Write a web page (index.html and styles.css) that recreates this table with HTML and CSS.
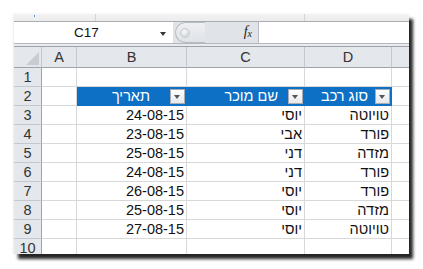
FILE: index.html
```html
<!DOCTYPE html>
<html lang="he">
<head>
<meta charset="utf-8">
<link rel="stylesheet" href="styles.css">
</head>
<body>
<div class="window">
  <div class="topstrip"><span class="dot"></span><span class="tick t1"></span><span class="tick t2"></span></div>
  <div class="fbar">
    <div class="namebox"><span class="ref">C17</span><span class="caret"></span></div>
    <div class="mid"><span class="pill"><span class="knob"></span></span><span class="fx">f<sub>x</sub></span></div>
    <div class="input"></div>
  </div>
  <div class="gap"></div>
  <div class="sheet">
    <div class="ch corner"><svg width="13" height="13" viewBox="0 0 13 13"><polygon points="13,0 13,13 0,13" fill="#c9cdd3"/></svg></div>
    <div class="ch">A</div><div class="ch">B</div><div class="ch">C</div><div class="ch">D</div><div class="ch last"></div>

    <div class="rh">1</div><div class="c"></div><div class="c"></div><div class="c"></div><div class="c"></div><div class="c last"></div>

    <div class="rh">2</div><div class="c"></div>
    <div class="c hd hb"><span class="ht">תאריך</span><span class="btn"></span></div>
    <div class="c hd hc"><span class="ht">שם מוכר</span><span class="btn"></span></div>
    <div class="c hd hdd"><span class="ht">סוג רכב</span><span class="btn"></span></div>
    <div class="c last"></div>

    <div class="rh">3</div><div class="c"></div><div class="c r">24-08-15</div><div class="c r">יוסי</div><div class="c r">טויוטה</div><div class="c last"></div>
    <div class="rh">4</div><div class="c"></div><div class="c r">23-08-15</div><div class="c r">אבי</div><div class="c r">פורד</div><div class="c last"></div>
    <div class="rh">5</div><div class="c"></div><div class="c r">25-08-15</div><div class="c r">דני</div><div class="c r">מזדה</div><div class="c last"></div>
    <div class="rh">6</div><div class="c"></div><div class="c r">24-08-15</div><div class="c r">דני</div><div class="c r">פורד</div><div class="c last"></div>
    <div class="rh">7</div><div class="c"></div><div class="c r">26-08-15</div><div class="c r">יוסי</div><div class="c r">פורד</div><div class="c last"></div>
    <div class="rh">8</div><div class="c"></div><div class="c r">25-08-15</div><div class="c r">יוסי</div><div class="c r">מזדה</div><div class="c last"></div>
    <div class="rh">9</div><div class="c"></div><div class="c r">27-08-15</div><div class="c r">יוסי</div><div class="c r">טויוטה</div><div class="c last"></div>
    <div class="rh r10">10</div><div class="c"></div><div class="c"></div><div class="c"></div><div class="c"></div><div class="c last"></div>
  </div>
</div>
</body>
</html>
```

FILE: styles.css
```css
* { box-sizing: border-box; }
html, body { margin: 0; padding: 0; background: #fff; }
body {
  width: 423px; height: 269px; overflow: hidden;
  font-family: "Liberation Sans", Arial, sans-serif;
  color: #111;
  padding: 14px 0 0 14px;
}
.window {
  width: 395px; height: 240px;
  background: #fff;
  overflow: hidden;
  box-shadow: 4px 5px 3px rgba(0,0,0,0.85), -1px 0 2px rgba(0,0,0,0.08);
  display: flex; flex-direction: column;
}
.topstrip {
  height: 8px; flex: none;
  background: linear-gradient(#f3f3f3, #ececec);
  border-bottom: 1px solid #a9adb3;
  position: relative;
}
.dot { position: absolute; left: 20px; top: 1px; width: 1px; height: 2px; background: #5b8fd0; }
.tick { position: absolute; top: 0; width: 1px; height: 7px; background: #d4d4d4; }
.t1 { left: 81px; }
.t2 { left: 290px; }
.fbar {
  height: 21px; flex: none;
  display: flex;
  background: #fff;
}
.namebox {
  width: 159px; flex: none;
  display: flex; align-items: center;
  font-size: 13.5px; color: #111;
  position: relative;
  background: #fff;
}
.ref { margin-left: 60px; }
.caret {
  position: absolute; left: 146px; top: 10px;
  width: 0; height: 0;
  border-left: 3.5px solid transparent; border-right: 3.5px solid transparent;
  border-top: 4px solid #333;
}
.mid {
  width: 86px; flex: none;
  background: #e0e3e8;
  position: relative;
  border-right: 1px solid #b9bdc3;
}
.pill {
  position: absolute; left: 2px; top: 0; width: 30px; height: 21px;
  border-radius: 11px 0 0 11px;
  border: 1px solid #b8bcc2; border-right: none;
  background: linear-gradient(#eef0f3, #dfe2e7);
}
.knob {
  position: absolute; left: 4px; top: 5px; width: 10px; height: 10px; border-radius: 50%;
  background: radial-gradient(circle at 40% 35%, #fafafa, #c4c8ce);
  border: 1px solid #c9ccd1;
}
.fx {
  position: absolute; right: 6px; top: 2px;
  font-family: "Liberation Serif", "Times New Roman", serif;
  font-style: italic; font-size: 14px; color: #222;
}
.fx sub { font-size: 10px; vertical-align: -1px; }
.input { flex: 1; background: #fff; }
.gap {
  height: 4px; flex: none;
  background: #e9ebee;
  border-top: 1px solid #b3b7bd;
  border-bottom: 1px solid #9ea3aa;
}
.sheet {
  flex: 1;
  display: grid;
  grid-template-columns: 28px 35px 110px 118px 87px 17px;
  grid-template-rows: 21px repeat(10, 19px);
  font-size: 14.5px;
}
.ch {
  background: #e4e7ec;
  border-right: 1px solid #c3c8cf;
  border-bottom: 1px solid #9ea3aa;
  display: flex; align-items: center; justify-content: center;
  color: #333;
  font-size: 14.5px;
}
.corner { justify-content: flex-end; align-items: flex-end; padding: 0 2px 2px 0; }
.rh {
  background: #e4e7ec;
  border-right: 1px solid #9ea3aa;
  border-bottom: 1px solid #c3c8cf;
  display: flex; align-items: center; justify-content: center;
  color: #333;
}
.r10 { align-items: flex-start; padding-top: 1px; }
.c {
  border-right: 1px solid #d8d8d8;
  border-bottom: 1px solid #d8d8d8;
  display: flex; align-items: center;
  white-space: nowrap;
}
.last { border-right: none; }
.r { justify-content: flex-end; padding-right: 2px; }
.hd {
  background: #0e70c4;
  border-right-color: #0e70c4;
  border-bottom-color: #0e70c4;
  color: #fff;
  justify-content: flex-end;
}
.hb .ht { margin-right: 20px; }
.hc .ht { margin-right: 10px; }
.hdd .ht { margin-right: 7px; }
.btn {
  width: 15px; height: 15px; flex: none;
  margin-right: 1px;
  background: linear-gradient(#ffffff, #e6e8eb);
  border: 1px solid #a8adb4;
  position: relative;
}
.btn::after {
  content: ""; position: absolute; left: 3px; top: 5px;
  border-left: 3.5px solid transparent; border-right: 3.5px solid transparent;
  border-top: 4px solid #555;
}
```
